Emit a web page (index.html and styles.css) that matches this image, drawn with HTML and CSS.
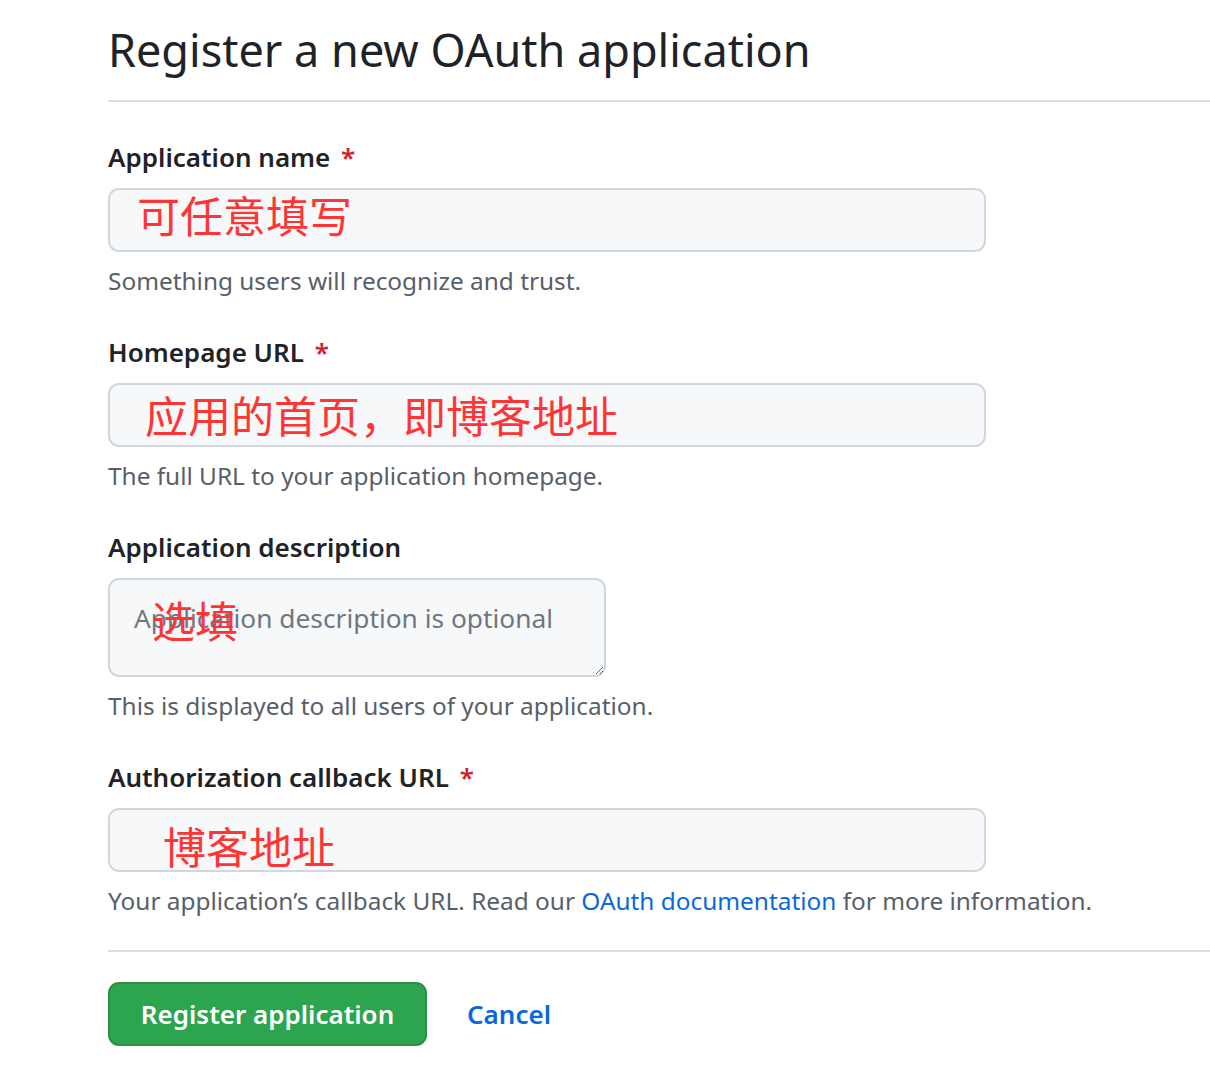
FILE: index.html
```html
<!DOCTYPE html>
<html lang="en">
<head>
<meta charset="utf-8">
<title>Register a new OAuth application</title>
<link rel="stylesheet" href="styles.css">
</head>
<body>
<div class="page">
  <div class="subhead">
    <h2 class="subhead-heading">Register a new OAuth application</h2>
  </div>
  <form class="form">
    <div class="group">
      <label class="label">Application name <span class="req">*</span></label>
      <div class="field">
        <input class="input" type="text">
        <span class="mark mark-1">可任意填写</span>
      </div>
      <p class="note">Something users will recognize and trust.</p>
    </div>
    <div class="group">
      <label class="label">Homepage URL <span class="req">*</span></label>
      <div class="field">
        <input class="input" type="text">
        <span class="mark mark-2">应用的首页，即博客地址</span>
      </div>
      <p class="note">The full URL to your application homepage.</p>
    </div>
    <div class="group">
      <label class="label">Application description</label>
      <div class="field field-narrow">
        <textarea class="textarea" placeholder="Application description is optional"></textarea>
        <span class="mark mark-3">选填</span>
      </div>
      <p class="note">This is displayed to all users of your application.</p>
    </div>
    <div class="group group-last">
      <label class="label">Authorization callback URL <span class="req">*</span></label>
      <div class="field">
        <input class="input" type="text">
        <span class="mark mark-4">博客地址</span>
      </div>
      <p class="note">Your application’s callback URL. Read our <a class="link" href="#">OAuth documentation</a> for more information.</p>
    </div>
    <div class="actions">
      <button class="btn-primary" type="button">Register application</button>
      <a class="btn-link" href="#">Cancel</a>
    </div>
  </form>
</div>
</body>
</html>
```
FILE: styles.css
```css
* { box-sizing: border-box; }
html, body { margin: 0; padding: 0; background: #ffffff; }
body {
  font-family: "Noto Sans", "Open Sans", "Noto Sans CJK SC", sans-serif;
  color: #24292f;
  overflow: hidden;
}
.page {
  padding-left: 108px;
  width: 1210px;
}
.subhead {
  padding-top: 20px;
  padding-bottom: 20px;
  border-bottom: 2px solid #d8dee4;
}
.subhead-heading {
  margin: 0;
  font-size: 45px;
  line-height: 60px;
  font-weight: 400;
  color: #1f2328;
}
.form { padding-top: 37px; }
.group { margin-bottom: 36px; }
.group-last { margin-bottom: 32px; }
.label {
  display: block;
  font-size: 26px;
  line-height: 36px;
  font-weight: 600;
  color: #1f2328;
  margin-bottom: 13px;
}
.req { color: #cf222e; margin-left: 4px; }
.field { position: relative; width: 878px; }
.field-narrow { width: 498px; }
.input, .textarea {
  display: block;
  width: 100%;
  height: 64px;
  border: 2px solid #d0d7de;
  border-radius: 11px;
  background: #f6f8fa;
  font-family: inherit;
  font-size: 24px;
  color: #24292f;
  padding: 0 24px;
  outline: none;
}
.textarea {
  height: 99px;
  padding: 16px 24px;
  font-size: 26.3px;
  line-height: 44px;
  resize: vertical;
}
.textarea::placeholder { color: #6e7781; opacity: 1; }
.mark {
  position: absolute;
  font-family: "Noto Sans CJK SC", sans-serif;
  font-size: 43px;
  line-height: 50px;
  color: #ff3535;
  white-space: nowrap;
  pointer-events: none;
}
.mark-1 { left: 29px; top: 1px; }
.mark-2 { left: 37px; top: 6px; }
.mark-3 { left: 44px; top: 16px; }
.mark-4 { left: 55px; top: 12px; }
.note {
  margin: 12px 0 0 0;
  font-size: 24.4px;
  line-height: 34px;
  color: #57606a;
}
.link { color: #0969da; text-decoration: none; }
.actions {
  border-top: 2px solid #d8dee4;
  padding-top: 30px;
  display: flex;
  align-items: center;
  gap: 40px;
}
.btn-primary {
  width: 319px;
  height: 64px;
  border: 2px solid rgba(27, 31, 36, 0.15);
  border-radius: 11px;
  background: #2da44e;
  color: #ffffff;
  font-family: inherit;
  font-size: 26px;
  font-weight: 600;
  padding: 0;
}
.btn-link {
  color: #0969da;
  text-decoration: none;
  font-size: 26px;
  font-weight: 600;
}
```
